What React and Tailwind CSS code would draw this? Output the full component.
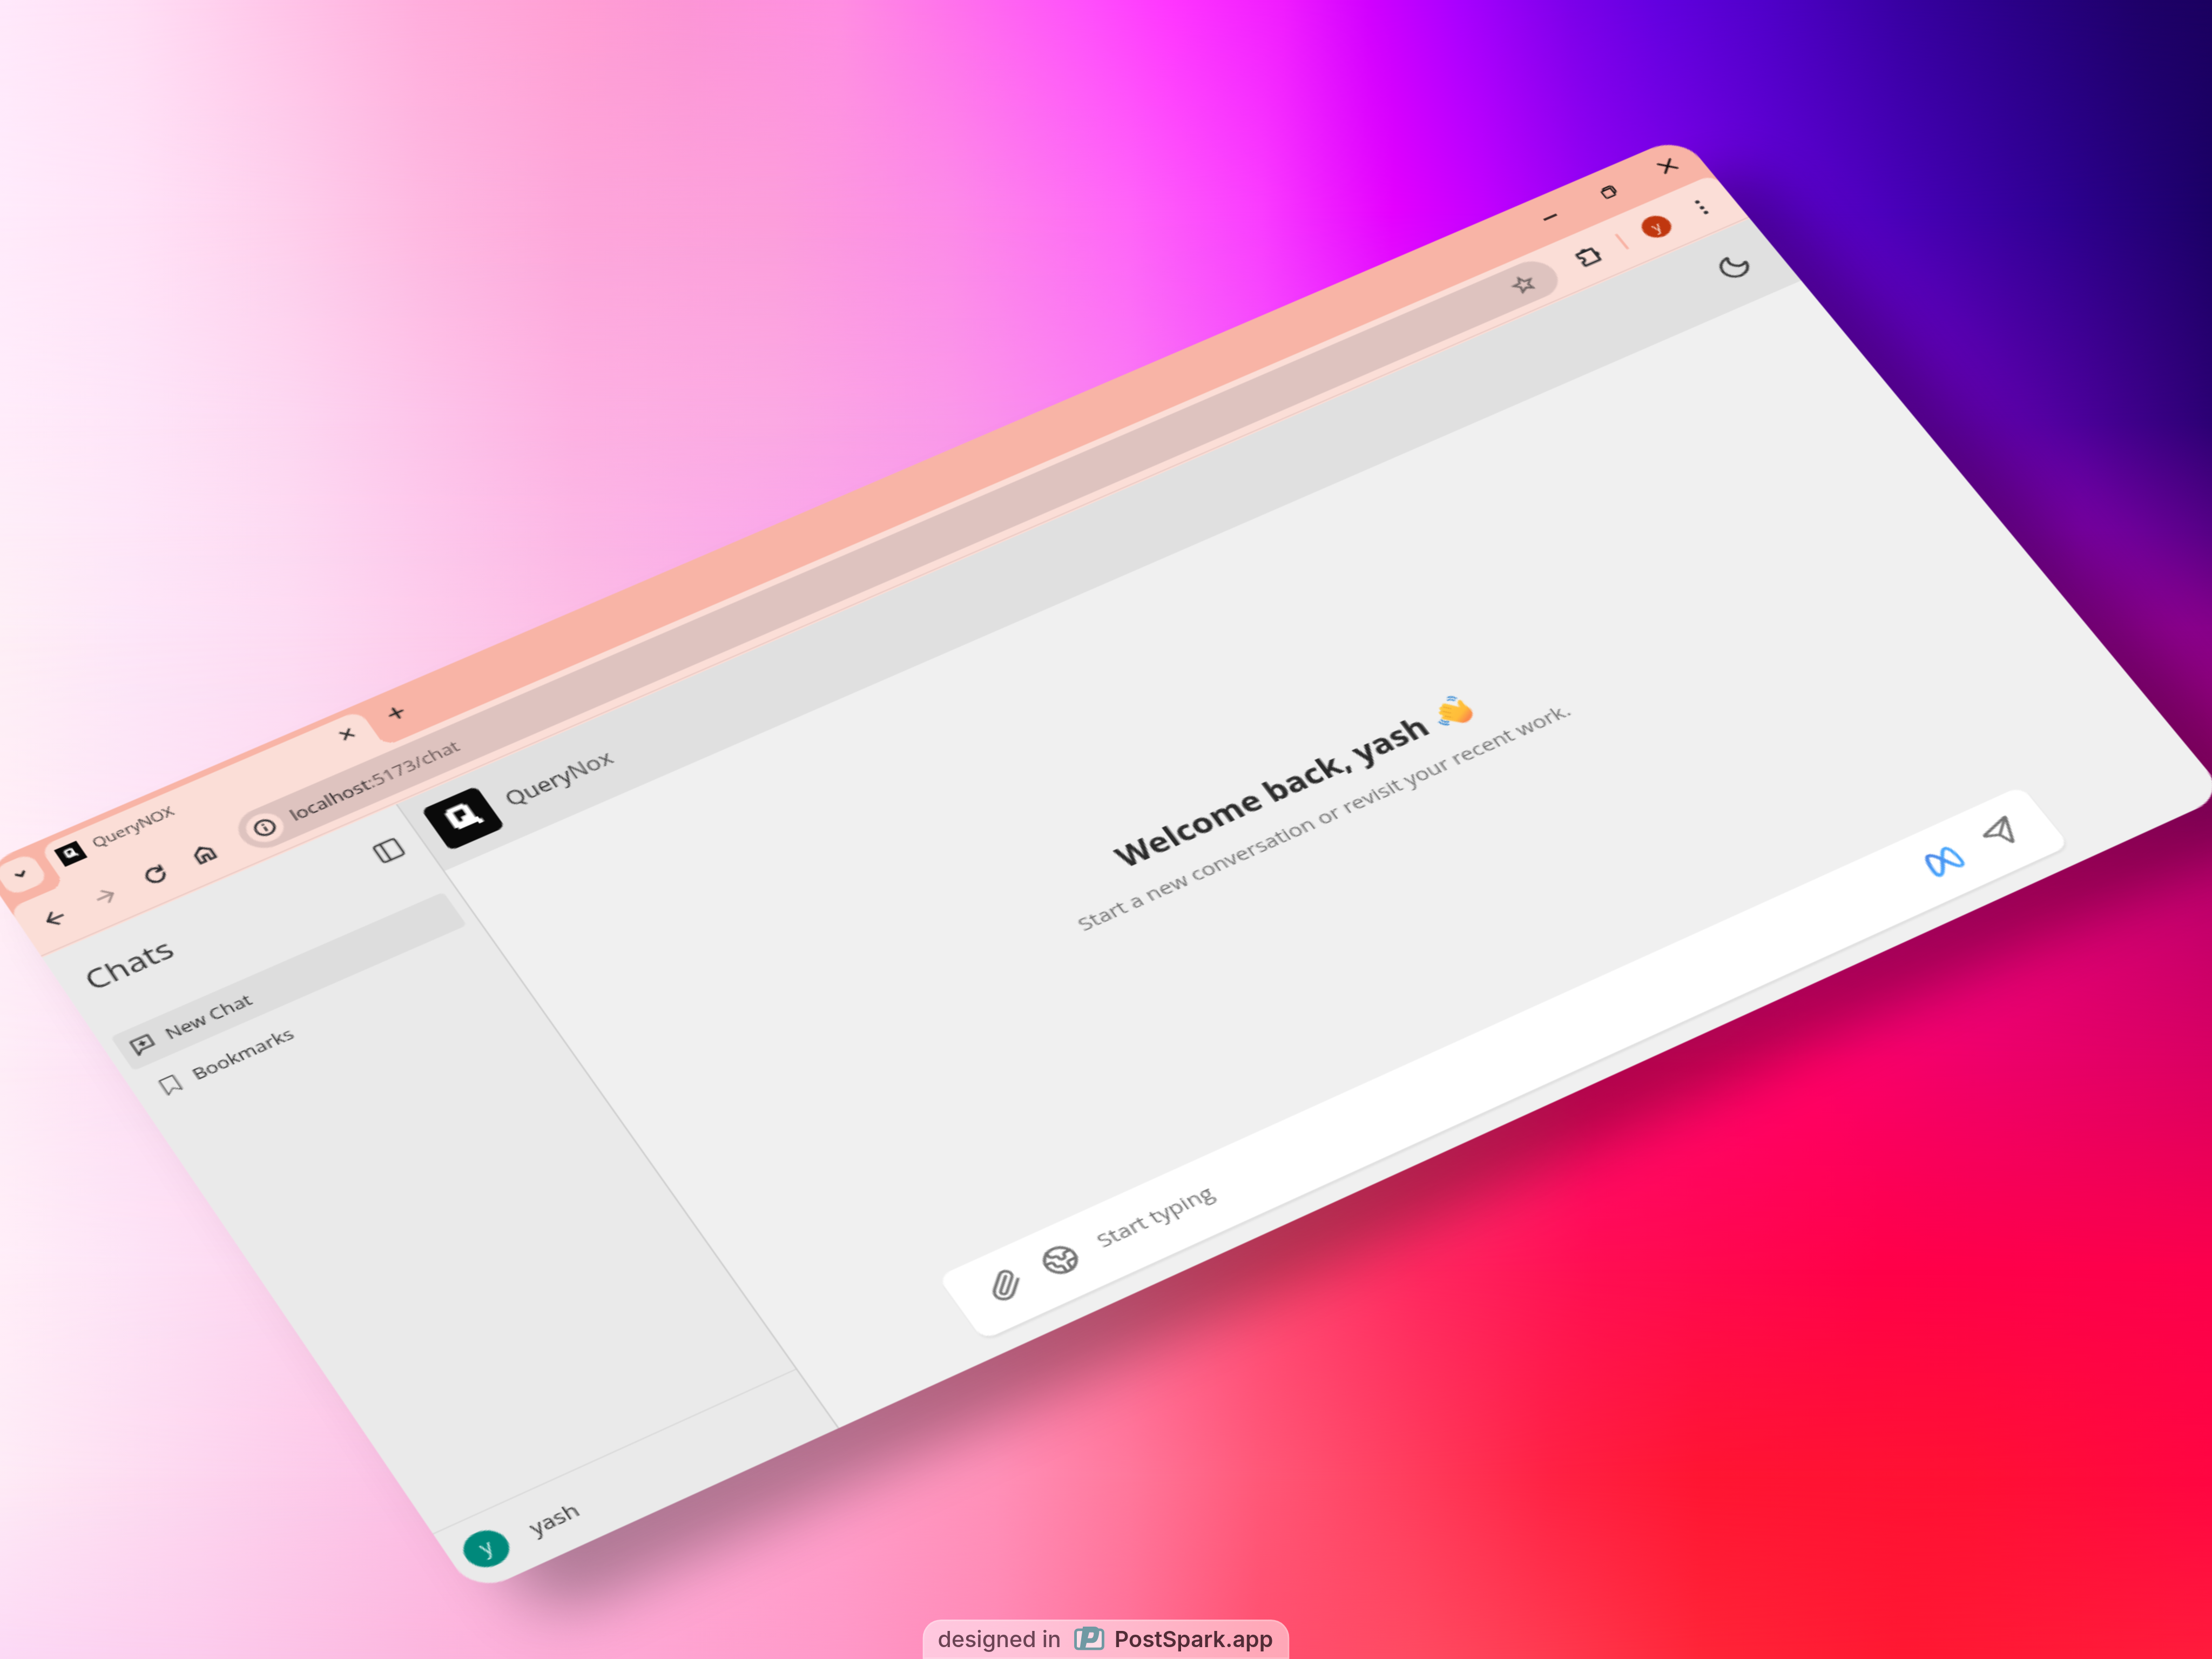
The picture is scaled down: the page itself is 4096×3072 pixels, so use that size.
import React from "react";
import {
  ArrowLeft,
  ArrowRight,
  ChevronDown,
  Earth,
  Moon,
  PanelLeft,
  Paperclip,
  Plus,
  Send,
  X,
} from "lucide-react";

// Colour mesh behind the window: each row holds [x %, colour] stops at a height of y %.
const MESH = [
  { y: 0, stops: [[0, "#ffe9fb"], [6, "#ffdff5"], [13, "#ffc4e8"], [19, "#ffaedd"], [26, "#ff9fd4"], [31, "#fc96d6"], [38, "#ff8ee2"], [43, "#ff72ec"], [49, "#ff50fb"], [53, "#ff35ff"], [58, "#f01cff"], [62, "#d000ff"], [66, "#a800ff"], [71, "#7c00ea"], [75, "#6200e0"], [80, "#4f00c8"], [86, "#3800a2"], [92, "#280082"], [97, "#1e0068"], [100, "#1b0060"]] },
  { y: 12.75, stops: [[0, "#ffebfb"], [6, "#ffe2f7"], [13, "#fecfec"], [19, "#feb9e1"], [26, "#fda6da"], [35, "#fc9edb"], [43, "#fd8ae8"], [51, "#ff64f8"], [57, "#fa3cff"], [63, "#e400ff"], [67, "#c400ff"], [72, "#9400f4"], [80, "#6200d4"], [86, "#4800b8"], [93, "#2e0092"], [100, "#1b0066"]] },
  { y: 25.5, stops: [[0, "#ffecfa"], [6, "#fee5f8"], [13, "#fdd7f1"], [19, "#fdc5ea"], [26, "#fdb1e2"], [35, "#fba9e3"], [43, "#fa98e9"], [51, "#fa7af4"], [60, "#f040ff"], [70, "#c000f0"], [80, "#8c00d0"], [88, "#6c00b8"], [94, "#4c009a"], [100, "#2c0074"]] },
  { y: 32, stops: [[0, "#feeef8"], [6, "#fee6f8"], [13, "#fddaf2"], [19, "#fdc9ec"], [26, "#fcb7e5"], [50, "#f890f0"], [70, "#cc20e0"], [85, "#9400b8"], [94, "#7c00a6"], [100, "#560086"]] },
  { y: 38, stops: [[0, "#feeff6"], [6, "#fde6f8"], [13, "#fddcf3"], [19, "#fdcdec"], [26, "#fcbde6"], [50, "#f890f0"], [70, "#d030d0"], [85, "#b000a8"], [94, "#9e009c"], [100, "#88008a"]] },
  { y: 51, stops: [[0, "#ffeef7"], [6, "#fde5f6"], [13, "#fddcf2"], [30, "#fcb8e4"], [60, "#f060c0"], [80, "#e800a0"], [92, "#d8007c"], [100, "#b80070"]] },
  { y: 64, stops: [[0, "#feedf7"], [5, "#fde2f5"], [12, "#fdd8f0"], [40, "#fd90c8"], [60, "#ff4884"], [72, "#ff0470"], [82, "#ff0068"], [90, "#ee006a"], [100, "#da0062"]] },
  { y: 76.5, stops: [[0, "#ffeef8"], [6, "#fde3f6"], [12, "#fdd7f0"], [35, "#fe9ec8"], [50, "#ff6c98"], [58, "#ff4470"], [64, "#ff2860"], [72, "#ff0e52"], [85, "#ff0048"], [100, "#fc004c"]] },
  { y: 89, stops: [[0, "#feebf6"], [9, "#fdd6ef"], [19, "#fcc0e5"], [38, "#ff9ec8"], [45, "#ff90b8"], [51, "#ff789c"], [57, "#ff5878"], [64, "#ff3c5c"], [70, "#ff2244"], [77, "#ff1532"], [89, "#ff1034"], [100, "#ff0542"]] },
  { y: 100, stops: [[0, "#fcd9f5"], [9, "#fccbec"], [19, "#fcb6de"], [29, "#fea6d3"], [38, "#ff98c8"], [45, "#ff88b5"], [51, "#ff7098"], [57, "#ff5070"], [64, "#ff4a62"], [70, "#ff3a50"], [77, "#ff2538"], [86, "#ff1832"], [100, "#ff1c3c"]] },
];

function Backdrop() {
  return (
    <div className="absolute inset-0">
      {MESH.map((row, i) => {
        const fade =
          i === 0
            ? undefined
            : `linear-gradient(to bottom, transparent ${MESH[i - 1].y}%, black ${row.y}%)`;
        return (
          <div
            key={row.y}
            className="absolute inset-0"
            style={{
              backgroundImage: `linear-gradient(to right, ${row.stops
                .map(([x, c]) => `${c} ${x}%`)
                .join(", ")})`,
              maskImage: fade,
            }}
          />
        );
      })}
    </div>
  );
}

// Pixel-style "Q" mark used for the favicon and for the app header.
function QMark({ className }) {
  return (
    <svg viewBox="0 0 40 40" className={className}>
      <rect width="40" height="40" fill="#0a0a0a" />
      <path
        fill="#fff"
        fillRule="evenodd"
        d="M13.5 8.5H25.5V10.5H27.5V23H29V25.5H30.5V29H27V27H13.5V25H11.5V10.5H13.5ZM16.5 12.5V21.5H19.2V18.3H23.3V12.5Z"
      />
    </svg>
  );
}

function WaveHand({ className }) {
  return (
    <svg viewBox="-14 -14 28 28" className={className}>
      <defs>
        <linearGradient id="hand" x1="0" y1="0" x2="0.5" y2="1">
          <stop offset="0" stopColor="#ffcc3d" />
          <stop offset="0.75" stopColor="#ffbc3a" />
          <stop offset="1" stopColor="#fb8a4a" />
        </linearGradient>
      </defs>
      <path
        fill="url(#hand)"
        d="M5.4 -0.6 C5.2 -2.4 5.6 -4.6 7.2 -5.8 C8.6 -6.4 9.6 -5 9.2 -3.6 C8.8 -2 9.4 0 10.2 2.4 C11.6 7.2 8.2 12.4 2.6 12.4 C0.6 12.4 -0.8 11.4 -2.2 9.8 L-9.2 3 C-10.6 1.4 -8.6 -0.4 -7.2 0.8 L-8.8 -1.4 C-9.8 -3.2 -7.8 -4.8 -6.4 -3.4 L-6.8 -4.6 C-7.6 -6.6 -5.4 -7.8 -4.1 -6.4 C-4.4 -8.4 -2 -9.2 -0.9 -7.6 Z"
      />
      <path
        d="M-7 1 L-4 4 M-6.2 -3.2 L-2.4 0.8 M-4 -6.2 L-0.6 -2.6"
        stroke="#e8a02c"
        strokeWidth="0.9"
        strokeLinecap="round"
        fill="none"
      />
      <path
        d="M1.6 -9.8 C3.2 -9.6 4.6 -8.6 5.2 -7.2 M3 -11.6 C5 -11.2 6.6 -10 7.2 -8.2 M-10.8 2.8 C-10.4 4.6 -9 6 -7.4 6.4 M-12.8 3.6 C-12.2 6 -10.6 7.8 -8.6 8.4"
        stroke="#2f86d2"
        strokeWidth="1.1"
        strokeLinecap="round"
        fill="none"
      />
    </svg>
  );
}

function MetaLogo({ className }) {
  return (
    <svg viewBox="-12 -12 24 24" className={className} fill="none">
      <defs>
        <linearGradient id="meta" x1="0" y1="-10" x2="0" y2="9" gradientUnits="userSpaceOnUse">
          <stop offset="0" stopColor="#4b86e6" />
          <stop offset="1" stopColor="#4aa8ff" />
        </linearGradient>
      </defs>
      <path
        stroke="#4aa6fb"
        strokeWidth="2.3"
        d="M0 -2 C3 -7 4 -9 6 -9 C9 -9 10.1 -1 10.1 4 C10.1 7.4 9.2 8.4 7.8 8.4"
      />
      <path
        stroke="url(#meta)"
        strokeWidth="2.7"
        d="M7.8 8.4 C5 8.4 3 3 0 -2 C-2 -6 -4 -9 -6.2 -9 C-9 -9 -10.1 -1 -10.1 4 C-10.1 7.4 -9.2 8.4 -7.8 8.4 C-5 8.4 -3 3 0 -2"
      />
    </svg>
  );
}

function TitleBar() {
  return (
    <div className="flex h-[40.5px] shrink-0 items-start bg-[#f8b4a6]">
      <div className="ml-[5.8px] mt-[6.2px] flex size-[27px] items-center justify-center rounded-[9px] bg-[#fbded7]">
        <ChevronDown className="size-[11px] text-[#222]" strokeWidth={4} />
      </div>
      <div className="relative ml-[7px] mt-[5px] flex h-[35.5px] w-[232px] items-center rounded-t-[10px] bg-[#fbded7] pb-[5.6px] pl-[7.3px]">
        <div className="absolute -left-[9px] bottom-0 size-[9px] bg-[radial-gradient(circle_at_0_0,#f8b4a6_8.8px,#fbded7_9.2px)]" />
        <div className="absolute -right-[9px] bottom-0 size-[9px] bg-[radial-gradient(circle_at_100%_0,#f8b4a6_8.8px,#fbded7_9.2px)]" />
        <QMark className="size-[16px]" />
        <span className="ml-[8.2px] text-[11.5px] leading-[16px] text-[#474240]">QueryNOX</span>
        <X className="ml-auto mr-[10px] size-[13px] text-[#222]" strokeWidth={2.6} />
      </div>
      <Plus className="ml-[12.5px] mt-[12.3px] size-[15px] text-[#222]" strokeWidth={2.7} />
      <div className="ml-auto flex h-[39.6px] items-center text-black">
        <div className="flex w-[46px] justify-center">
          <div className="h-[1.8px] w-[10px] bg-[#3a2a28]" />
        </div>
        <div className="flex w-[46px] justify-center">
          <svg viewBox="0 0 10 10" className="size-[10px]" fill="none" stroke="#111" strokeWidth="1.1">
            <rect x="0.6" y="2.4" width="7" height="7" rx="0.9" />
            <path d="M2.4 2.2 C2.4 1 3 0.6 4 0.6 H7 C8.6 0.6 9.4 1.4 9.4 3 V6 C9.4 7 9 7.4 8 7.5" strokeWidth="1.3" />
          </svg>
        </div>
        <div className="flex w-[46px] justify-center">
          <svg viewBox="0 0 10 10" className="size-[11px]" stroke="#000" strokeWidth="1.3">
            <path d="M0.3 0.3L9.7 9.7M9.7 0.3L0.3 9.7" />
          </svg>
        </div>
      </div>
    </div>
  );
}

function ToolBar() {
  return (
    <div className="shrink-0 bg-[#f8b4a6]">
      <div className="flex h-[45.5px] items-center rounded-t-[9px] bg-[#fbded7] pl-[0.5px] text-[#24262a]">
        <div className="flex w-[42px] justify-center">
          <ArrowLeft className="size-[18px]" strokeWidth={2.3} />
        </div>
        <div className="flex w-[31px] justify-center">
          <ArrowRight className="size-[18px] text-[#a08c89]" strokeWidth={2} />
        </div>
        <div className="flex w-[40px] justify-center">
          <svg viewBox="0 0 16 16" className="size-[16px]" fill="none" stroke="currentColor" strokeWidth="1.7">
            <path d="M12.9 5.2 A5.7 5.7 0 1 0 13.7 8.4" />
            <path d="M13.6 1.6 V5.9 H9.3" />
          </svg>
        </div>
        <div className="flex w-[31px] justify-center">
          <svg viewBox="0 0 16 16" className="size-[16px]" fill="none" stroke="currentColor" strokeWidth="1.7">
            <path d="M2.6 6.4 L8 2.1 L13.4 6.4 V14 H9.7 V9.4 H6.3 V14 H2.6 Z" />
          </svg>
        </div>
        <div className="ml-[11px] flex h-[34px] w-[986.2px] items-center rounded-full bg-[#dec3bf]">
          <div className="ml-[5px] flex size-[24px] items-center justify-center rounded-full bg-[#fbded7]">
            <svg viewBox="0 0 16 16" className="size-[16px]" fill="none" stroke="currentColor" strokeWidth="1.5">
              <circle cx="8" cy="8" r="6.2" />
              <path d="M8 7.2V11.2M8 4.6V6" />
            </svg>
          </div>
          <span className="ml-[7.7px] text-[13.3px] leading-[20px] text-[#6b5a59]">
            <span className="text-[#2b2628]">localhost</span>:5173/chat
          </span>
          <svg viewBox="0 0 24 24" className="ml-auto mr-[14.6px] size-[18px]" fill="none" stroke="#6e6463" strokeWidth="2.1">
            <path d="M12 3.6 L14.4 9.3 L20.6 9.8 L15.9 13.9 L17.3 19.9 L12 16.7 L6.7 19.9 L8.1 13.9 L3.4 9.8 L9.6 9.3 Z" />
          </svg>
        </div>
        <svg viewBox="0 0 18 18" className="mb-[1px] ml-[18.8px] size-[18px]" fill="none" stroke="currentColor" strokeWidth="1.7" strokeLinejoin="round">
          <path d="M2.4 4.2 H14 V15.6 H2.4 V12 C5.8 12 5.8 7.8 2.4 7.8 Z" />
          <path d="M6.2 4 A2 2 0 0 1 10.2 4 Z M14.2 7.9 A2 2 0 0 1 14.2 11.9 Z" fill="currentColor" strokeWidth="0.6" />
        </svg>
        <div className="ml-[16px] h-[16px] w-[1.6px] rounded bg-[#f8b4a6]" />
        <div className="ml-[15.7px] flex size-[20px] items-center justify-center rounded-full bg-[#c0370f] pb-[2px] text-[11px] leading-none text-[#fbe3da]">
          y
        </div>
        <div className="ml-[24.5px] flex flex-col gap-[2.4px]">
          <div className="size-[3px] rounded-full bg-current" />
          <div className="size-[3px] rounded-full bg-current" />
          <div className="size-[3px] rounded-full bg-current" />
        </div>
      </div>
      <div className="h-px bg-[#ebcbc5]" />
      <div className="h-px bg-[#fbded7]" />
    </div>
  );
}

function Sidebar() {
  return (
    <div className="flex w-[256px] shrink-0 flex-col border-r border-[#cdcdcd] bg-[#eaeaea] text-[#333]">
      <div className="flex h-[64px] items-center justify-between pl-[15.6px] pr-[12px]">
        <span className="mt-[2px] text-[22.6px] leading-[32px]">Chats</span>
        <PanelLeft className="size-[20px] text-[#3c3c3c]" strokeWidth={1.8} />
      </div>
      <div className="flex flex-col gap-[5.5px] px-[8px] pt-[16px] text-[13.3px]">
        <div className="flex h-[32px] items-center rounded-[4px] bg-[#dddddd] pl-[7.2px] text-[#333]">
          <svg viewBox="0 0 16 16" className="size-[16px]" fill="none" stroke="currentColor" strokeWidth="1.3">
            <path d="M2 2.2H14V11.2H5L2 14.2Z" strokeLinejoin="round" />
            <path d="M8 4.4V9M5.7 6.7H10.3" strokeWidth="1.5" />
          </svg>
          <span className="ml-[8.2px] mt-[2.4px]">New Chat</span>
        </div>
        <div className="flex h-[32px] items-center pl-[7.2px]">
          <svg viewBox="0 0 16 16" className="size-[16px]" fill="none" stroke="#4a4a4a" strokeWidth="1">
            <path d="M3.2 1.5H12.8V14.6L8 10.8L3.2 14.6Z" />
          </svg>
          <span className="ml-[8px] mt-[3px]">Bookmarks</span>
        </div>
      </div>
      <div className="mt-auto flex h-[54px] items-center border-t border-[#dadada] pl-[9.2px]">
        <div className="mb-[1px] flex size-[28px] items-center justify-center rounded-full bg-[#00897b] pb-[3px] text-[14px] leading-none text-[#d7f0ec]">
          y
        </div>
        <span className="ml-[16.5px] text-[15px] font-medium">yash</span>
      </div>
    </div>
  );
}

function MainPanel() {
  return (
    <div className="flex flex-1 flex-col bg-[#f0f0f0]">
      <div className="flex h-[65px] shrink-0 items-center bg-[#e0e0e0] pb-[1.4px] pl-[11.2px] pr-[20px]">
        <QMark className="size-[40px] rounded-[5px]" />
        <span className="ml-[11.3px] mt-[2px] text-[16px] font-medium text-[#333]">
          Query<span className="text-[#555]">Nox</span>
        </span>
        <Moon className="ml-auto size-[24px] text-[#3a3a3a]" strokeWidth={2} />
      </div>
      <div className="flex flex-1 flex-col items-center justify-center pb-[1px]">
        <div className="mr-[1.6px] flex h-[36px] items-center whitespace-nowrap">
          <span className="text-[22.7px] font-bold text-[#2b2b2b]">Welcome back, yash</span>
          <WaveHand className="mb-[1px] ml-[8px] size-[28px]" />
        </div>
        <div className="mt-[4px] h-[24px] whitespace-nowrap text-[15px] leading-[24px] text-[#757575]">
          Start a new conversation or revisit your recent work.
        </div>
      </div>
      <div className="mx-auto mb-[15px] flex h-[57.6px] w-[801.5px] items-center rounded-[9px] bg-white pb-[4.2px] pl-[20.5px] pr-[20.5px] text-[#737373] shadow-[0_2px_2px_rgba(0,0,0,0.07)]">
        <Paperclip className="size-[24px]" strokeWidth={2} />
        <Earth className="ml-[16.3px] size-[24px]" strokeWidth={2} />
        <span className="ml-[15.7px] mb-[1px] text-[15.2px]">Start typing</span>
        <MetaLogo className="ml-auto mr-[20.5px] mt-[3px] size-[24px]" />
        <Send className="size-[24px]" strokeWidth={2} />
      </div>
    </div>
  );
}

function BrowserWindow() {
  return (
    <div className="absolute left-0 top-0 flex h-[672px] w-[1280px] origin-top-left flex-col rounded-[24px] font-['Open_Sans','Noto_Sans',sans-serif] shadow-[28px_42px_44px_rgba(0,0,0,0.3)] [transform:matrix3d(2.58186,-1.04713,0,0.000038906,1.30218,1.80775,0,-0.00006753,0,0,1,0,-37.01,1603.67,0,1)]">
      <div className="flex h-full w-full flex-col overflow-hidden rounded-[24px]">
        <TitleBar />
        <ToolBar />
        <div className="flex min-h-0 flex-1">
          <Sidebar />
          <MainPanel />
        </div>
      </div>
    </div>
  );
}

function Credit() {
  return (
    <div className="absolute bottom-0 left-1/2 flex h-[73px] w-[679px] -translate-x-1/2 items-center rounded-t-[34px] border-[3px] border-white/20 bg-white/50 pl-[25px] font-['Inter',sans-serif] text-[41.2px] leading-none text-[#6b4454]">
      <span className="font-medium">designed in</span>
      <svg viewBox="0 0 58 48" className="ml-[24px] mt-[-2px] h-[47px] w-[57px] shrink-0">
        <rect x="3" y="7" width="52" height="36" rx="5" fill="#fff" fillOpacity="0.5" stroke="#7099a3" strokeWidth="5" />
        <path d="M17 1H38C48 1 49 8 47 17C45 28 41 32 32 32H24L21 44H11Z" fill="#7099a3" />
        <path d="M29 12H35C38 12 38 14 37 18C36 22 34 23 31 23H26Z" fill="#ffd9e6" />
      </svg>
      <span className="ml-[18px] font-semibold text-[#512c36]">PostSpark.app</span>
    </div>
  );
}

export default function App() {
  return (
    <div className="relative h-[3072px] w-[4096px] overflow-hidden">
      <Backdrop />
      <BrowserWindow />
      <Credit />
    </div>
  );
}
